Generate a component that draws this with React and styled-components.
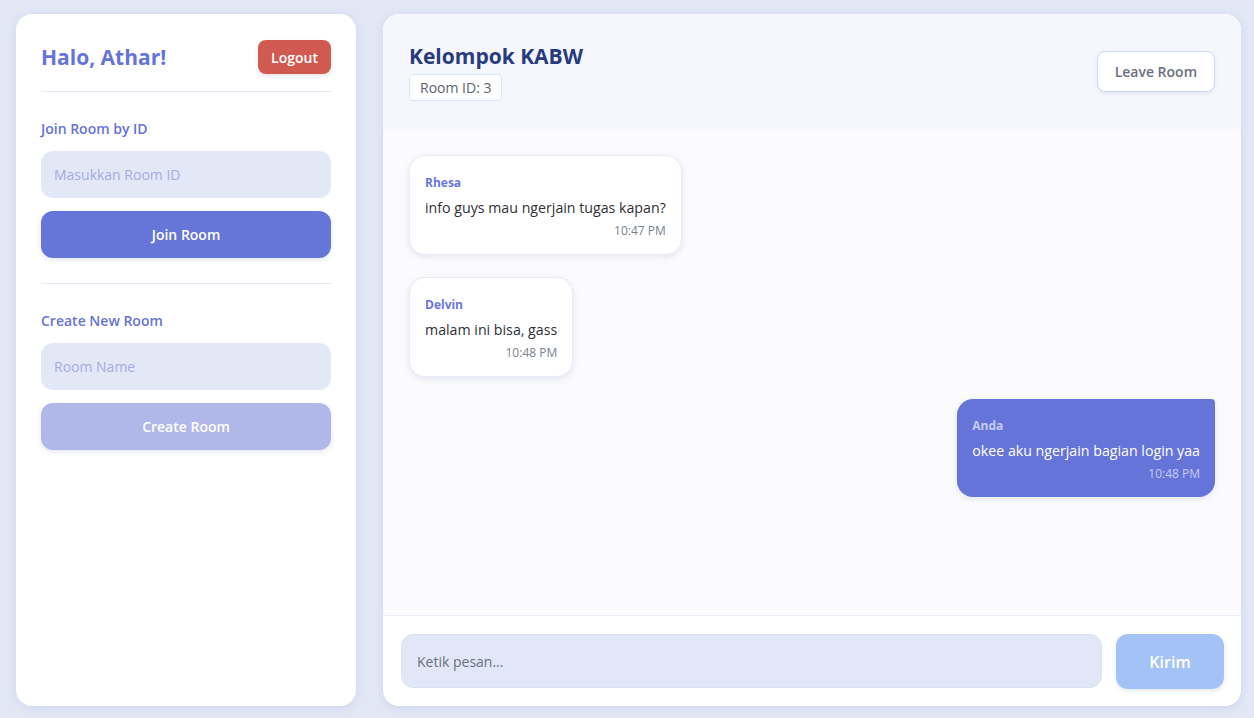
import React from "react";
import styled, { createGlobalStyle } from "styled-components";

const GlobalStyle = createGlobalStyle`
  html, body {
    margin: 0;
    padding: 0;
    background: #e1e7f5;
    font-family: "Open Sans", "Noto Sans", sans-serif;
  }
  * { box-sizing: border-box; }
`;

const Page = styled.div`
  display: flex;
  gap: 27px;
  padding: 14px 13px 12px 16px;
  height: 718px;
`;

const Sidebar = styled.aside`
  width: 340px;
  flex-shrink: 0;
  background: #ffffff;
  border-radius: 16px;
  padding: 26px 25px;
  box-shadow: 0 2px 8px rgba(90, 110, 180, 0.12);
  display: flex;
  flex-direction: column;
`;

const SideHeader = styled.div`
  display: flex;
  justify-content: space-between;
  align-items: center;
  padding-bottom: 17px;
  border-bottom: 1px solid #e3e8f5;
`;

const Greeting = styled.h2`
  margin: 0;
  font-size: 21px;
  font-weight: 700;
  color: #6673d8;
`;

const LogoutButton = styled.button`
  background: #d05a50;
  color: #ffffff;
  border: none;
  border-radius: 8px;
  height: 34px;
  padding: 0 13px;
  font-family: inherit;
  font-size: 14px;
  font-weight: 600;
  box-shadow: 0 2px 4px rgba(0, 0, 0, 0.1);
`;

const Section = styled.div`
  display: flex;
  flex-direction: column;
  padding: 27px 0 25px;
  border-bottom: ${p => (p.$divider ? "1px solid #e3e8f5" : "none")};
`;

const SectionTitle = styled.h3`
  margin: 0 0 13px;
  font-size: 14px;
  font-weight: 600;
  color: #6673d6;
`;

const SideInput = styled.input`
  height: 47px;
  border: none;
  border-radius: 12px;
  background: #e3e8f6;
  padding: 0 13px;
  font-family: inherit;
  font-size: 14px;
  color: #333;
  margin-bottom: 13px;
  &::placeholder { color: #a2ace6; }
`;

const SideButton = styled.button`
  height: 47px;
  border: none;
  border-radius: 12px;
  background: ${p => (p.$muted ? "#b0b8ea" : "#6675d8")};
  color: #ffffff;
  font-family: inherit;
  font-size: 14px;
  font-weight: 600;
  box-shadow: 0 2px 5px rgba(80, 90, 160, 0.15);
`;

const ChatPanel = styled.main`
  flex: 1;
  background: #ffffff;
  border-radius: 16px;
  box-shadow: 0 2px 8px rgba(90, 110, 180, 0.12);
  display: flex;
  flex-direction: column;
  overflow: hidden;
`;

const ChatHeader = styled.header`
  height: 115px;
  background: #f5f7fc;
  padding: 0 26px;
  display: flex;
  justify-content: space-between;
  align-items: center;
`;

const RoomTitle = styled.h1`
  margin: 0 0 4px;
  font-size: 21px;
  font-weight: 700;
  color: #283a80;
`;

const RoomBadge = styled.span`
  display: inline-block;
  background: #ffffff;
  border: 1px solid #dde6f8;
  border-radius: 4px;
  padding: 3px 10px;
  font-size: 14px;
  color: #5d6370;
`;

const LeaveButton = styled.button`
  height: 41px;
  padding: 0 17px;
  background: #ffffff;
  border: 1px solid #c9d8f5;
  border-radius: 8px;
  font-family: inherit;
  font-size: 14px;
  font-weight: 600;
  color: #6b7080;
  box-shadow: 0 2px 4px rgba(80, 100, 160, 0.1);
`;

const Messages = styled.div`
  flex: 1;
  background: #fbfbfd;
  padding: 26px;
  display: flex;
  flex-direction: column;
  gap: 22px;
  border-bottom: 1px solid #e9eefa;
`;

const Bubble = styled.div`
  align-self: ${p => (p.$mine ? "flex-end" : "flex-start")};
  background: ${p => (p.$mine ? "#6574d9" : "#ffffff")};
  border-radius: ${p => (p.$mine ? "16px 4px 16px 16px" : "16px")};
  border: ${p => (p.$mine ? "none" : "1px solid #e8ecf6")};
  box-shadow: 0 2px 6px rgba(60, 70, 120, 0.12);
  padding: 18px 15px 15px 15px;
  display: flex;
  flex-direction: column;
`;

const Sender = styled.div`
  font-size: 12px;
  font-weight: 700;
  color: ${p => (p.$mine ? "#c6ccf4" : "#6a75e0")};
  margin-bottom: 7px;
`;

const MessageText = styled.div`
  font-size: 14.2px;
  color: ${p => (p.$mine ? "#ffffff" : "#2f3136")};
  margin-bottom: 5px;
`;

const Time = styled.div`
  align-self: flex-end;
  font-size: 12px;
  color: ${p => (p.$mine ? "#c5ccf4" : "#7a7f8c")};
`;

const Composer = styled.form`
  display: flex;
  gap: 14px;
  padding: 18px 17px 17px 18px;
`;

const ComposerInput = styled.input`
  flex: 1;
  height: 54px;
  border: 1px solid #dbe2f3;
  border-radius: 12px;
  background: #e1e7f6;
  padding: 0 15px;
  font-family: inherit;
  font-size: 14px;
  &::placeholder { color: #6b7080; }
`;

const SendButton = styled.button`
  width: 108px;
  height: 55px;
  border: none;
  border-radius: 12px;
  background: #a3c2f5;
  color: #ffffff;
  font-family: inherit;
  font-size: 16px;
  font-weight: 600;
  box-shadow: 0 2px 5px rgba(80, 100, 160, 0.15);
`;

const messages = [
  { id: 1, sender: "Rhesa", text: "info guys mau ngerjain tugas kapan?", time: "10:47 PM" },
  { id: 2, sender: "Delvin", text: "malam ini bisa, gass", time: "10:48 PM" },
  { id: 3, sender: "Anda", text: "okee aku ngerjain bagian login yaa", time: "10:48 PM", mine: true }
];

export default function App() {
  return (
    <>
      <GlobalStyle />
      <Page>
        <Sidebar>
          <SideHeader>
            <Greeting>Halo, Athar!</Greeting>
            <LogoutButton>Logout</LogoutButton>
          </SideHeader>
          <Section $divider>
            <SectionTitle>Join Room by ID</SectionTitle>
            <SideInput placeholder="Masukkan Room ID" />
            <SideButton>Join Room</SideButton>
          </Section>
          <Section>
            <SectionTitle>Create New Room</SectionTitle>
            <SideInput placeholder="Room Name" />
            <SideButton $muted>Create Room</SideButton>
          </Section>
        </Sidebar>
        <ChatPanel>
          <ChatHeader>
            <div>
              <RoomTitle>Kelompok KABW</RoomTitle>
              <RoomBadge>Room ID: 3</RoomBadge>
            </div>
            <LeaveButton>Leave Room</LeaveButton>
          </ChatHeader>
          <Messages>
            {messages.map(m => (
              <Bubble key={m.id} $mine={m.mine}>
                <Sender $mine={m.mine}>{m.sender}</Sender>
                <MessageText $mine={m.mine}>{m.text}</MessageText>
                <Time $mine={m.mine}>{m.time}</Time>
              </Bubble>
            ))}
          </Messages>
          <Composer onSubmit={e => e.preventDefault()}>
            <ComposerInput placeholder="Ketik pesan..." />
            <SendButton type="submit">Kirim</SendButton>
          </Composer>
        </ChatPanel>
      </Page>
    </>
  );
}
